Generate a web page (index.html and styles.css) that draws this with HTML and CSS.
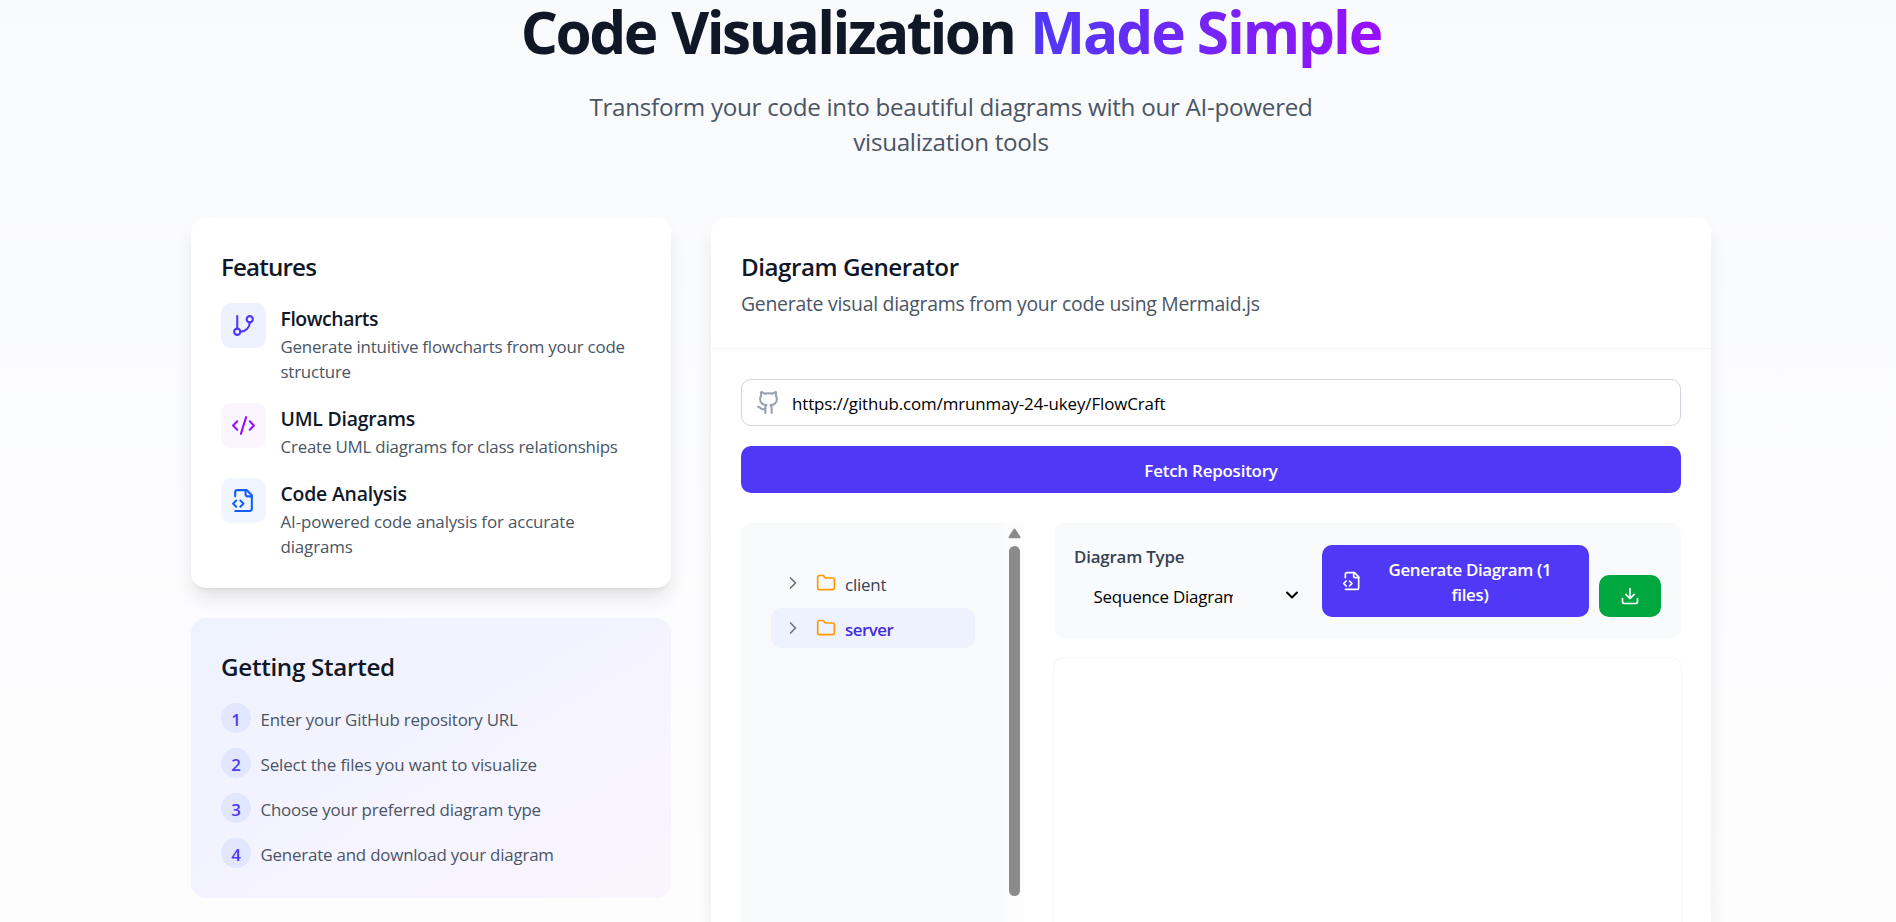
FILE: index.html
```html
<!DOCTYPE html>
<html lang="en">
<head>
<meta charset="utf-8">
<title>Code Visualization Made Simple</title>
<link rel="stylesheet" href="styles.css">
</head>
<body>
<svg class="sprite" aria-hidden="true">
  <symbol id="file-code" viewBox="0 0 24 24"><path d="M4 22h14a2 2 0 0 0 2-2V7l-5-5H6a2 2 0 0 0-2 2v4"/><path d="M14 2v4a2 2 0 0 0 2 2h4"/><path d="m5 12-3 3 3 3"/><path d="m9 18 3-3-3-3"/></symbol>
  <symbol id="folder" viewBox="0 0 24 24"><path d="M20 20a2 2 0 0 0 2-2V8a2 2 0 0 0-2-2h-7.9a2 2 0 0 1-1.69-.9L9.6 3.9A2 2 0 0 0 7.93 3H4a2 2 0 0 0-2 2v13a2 2 0 0 0 2 2Z"/></symbol>
  <symbol id="chevron" viewBox="0 0 24 24"><path d="m9 18 6-6-6-6"/></symbol>
</svg>
<main class="page">
  <header class="hero">
    <h1 class="hero-title"><span class="hero-dark">Code Visualization </span><span class="hero-accent">Made Simple</span></h1>
    <p class="hero-sub">Transform your code into beautiful diagrams with our AI-powered<br>visualization tools</p>
  </header>
  <div class="columns">
    <aside class="side">
      <section class="card features">
        <h2 class="card-title t-features">Features</h2>
        <div class="feature-list">
          <div class="feature">
            <span class="tile tile-indigo"><svg class="icon" viewBox="0 0 24 24"><path d="M6 3v12"/><circle cx="18" cy="6" r="3"/><circle cx="6" cy="18" r="3"/><path d="M18 9a9 9 0 0 1-9 9"/></svg></span>
            <div><h3 class="feature-name n-flow">Flowcharts</h3><p class="feature-text">Generate intuitive flowcharts from your code structure</p></div>
          </div>
          <div class="feature">
            <span class="tile tile-purple"><svg class="icon" viewBox="0 0 24 24"><path d="m18 16 4-4-4-4"/><path d="m6 8-4 4 4 4"/><path d="m14.5 4-5 16"/></svg></span>
            <div><h3 class="feature-name">UML Diagrams</h3><p class="feature-text">Create UML diagrams for class relationships</p></div>
          </div>
          <div class="feature">
            <span class="tile tile-blue"><svg class="icon"><use href="#file-code"/></svg></span>
            <div><h3 class="feature-name">Code Analysis</h3><p class="feature-text t-ai">AI-powered code analysis for accurate diagrams</p></div>
          </div>
        </div>
      </section>
      <section class="card started">
        <h2 class="card-title t-started">Getting Started</h2>
        <ol class="steps">
          <li class="step"><span class="num">1</span><span>Enter your GitHub repository URL</span></li>
          <li class="step"><span class="num">2</span><span class="t-select">Select the files you want to visualize</span></li>
          <li class="step"><span class="num">3</span><span>Choose your preferred diagram type</span></li>
          <li class="step"><span class="num">4</span><span>Generate and download your diagram</span></li>
        </ol>
      </section>
    </aside>
    <section class="generator">
      <div class="gen-head">
        <h2 class="card-title t-gen">Diagram Generator</h2>
        <p class="gen-sub">Generate visual diagrams from your code using Mermaid.js</p>
      </div>
      <div class="gen-body">
        <div class="url-field">
          <svg class="icon" viewBox="0 0 24 24"><path d="M15 22v-4a4.8 4.8 0 0 0-1-3.5c3 0 6-2 6-5.5.08-1.25-.27-2.48-1-3.5.28-1.15.28-2.35 0-3.5 0 0-1 0-3 1.5-2.64-.5-5.36-.5-8 0C6 2 5 2 5 2c-.3 1.15-.3 2.35 0 3.5A5.403 5.403 0 0 0 4 9c0 3.5 3 5.5 6 5.5-.39.49-.68 1.05-.85 1.65-.17.6-.22 1.23-.15 1.85v4"/><path d="M9 18c-4.51 2-5-2-7-2"/></svg>
          <span class="url">https://github.com/mrunmay-24-ukey/FlowCraft</span>
        </div>
        <button class="fetch">Fetch Repository</button>
        <div class="workspace">
          <div class="tree">
            <div class="tree-rows">
              <div class="row"><svg class="chev"><use href="#chevron"/></svg><svg class="fold"><use href="#folder"/></svg><span>client</span></div>
              <div class="row selected"><svg class="chev"><use href="#chevron"/></svg><svg class="fold"><use href="#folder"/></svg><span>server</span></div>
            </div>
            <div class="scrollbar">
              <svg class="arrow" viewBox="0 0 13 11"><path d="M6.5 1.5 11.5 9.3H1.5Z"/></svg>
              <div class="thumb"></div>
            </div>
          </div>
          <div class="output">
            <div class="toolbar">
              <div class="type">
                <span class="type-label">Diagram Type</span>
                <div class="select"><span class="select-text">Sequence Diagram</span><svg class="select-arrow" viewBox="0 0 12 8"><path d="m1 1.5 5 5 5-5"/></svg></div>
              </div>
              <button class="generate"><svg class="icon-sm"><use href="#file-code"/></svg><span class="generate-text">Generate Diagram (1<br>files)</span></button>
              <button class="download" aria-label="Download"><svg class="icon-sm" viewBox="0 0 24 24"><path d="M12 15V3"/><path d="M21 15v4a2 2 0 0 1-2 2H5a2 2 0 0 1-2-2v-4"/><path d="m7 10 5 5 5-5"/></svg></button>
            </div>
            <div class="canvas"></div>
          </div>
        </div>
      </div>
    </section>
  </div>
</main>
</body>
</html>
```
FILE: styles.css
```css
* { box-sizing: border-box; margin: 0; padding: 0; }
body {
  height: 922px;
  overflow: hidden;
  background: linear-gradient(#f9fafc, #fdfdfe);
  font: 400 16.9px/25px "Open Sans", "Noto Sans", sans-serif;
  letter-spacing: -0.2px;
  color: #4a5565;
}
svg { display: block; flex: none; fill: none; stroke: currentColor; stroke-width: 2; stroke-linecap: round; stroke-linejoin: round; }
.sprite { width: 0; height: 0; position: absolute; }
button { border: 0; font: inherit; color: #fff; letter-spacing: inherit; }
.icon { width: 25px; height: 25px; }
.icon-sm { width: 20px; height: 20px; }
.page { width: 1520px; height: 922px; margin-left: 191px; }

.hero { height: 218px; text-align: center; }
.hero-title { height: 88px; font-size: 58.5px; line-height: 63px; font-weight: 700; color: #101828; white-space: nowrap; }
.hero-dark { letter-spacing: -2.55px; word-spacing: 3px; }
.hero-accent { letter-spacing: -2.1px; background: linear-gradient(90deg, #4f39f6, #9810fa); -webkit-background-clip: text; background-clip: text; color: transparent; }
.hero-sub { font-size: 24.2px; line-height: 35px; letter-spacing: -0.28px; padding-top: 1px; }

.columns { display: grid; grid-template-columns: 480px 1000px; gap: 40px; align-items: start; }
.side { display: grid; gap: 30px; }
.card { padding: 30px; border-radius: 15px; }
.features { height: 370px; background: #fff; box-shadow: 0 12.5px 18.75px -3.75px rgba(0,0,0,.1), 0 5px 7.5px -5px rgba(0,0,0,.1); }
.card-title { height: 35px; font-size: 24.2px; line-height: 37px; font-weight: 600; color: #101828; }
.t-features { letter-spacing: -0.85px; }
.t-started { letter-spacing: -0.3px; }
.t-gen { letter-spacing: -0.48px; }
.feature-list { display: grid; gap: 20px; margin-top: 20px; }
.feature { display: flex; gap: 14.5px; align-items: flex-start; }
.tile { flex: none; padding: 10px; border-radius: 10px; }
.tile-indigo { background: #eef2ff; color: #4f39f6; }
.tile-purple { background: #faf5ff; color: #9810fa; }
.tile-blue { background: #eff6ff; color: #155dfc; }
.feature-name { height: 30px; font-size: 19.4px; line-height: 32px; font-weight: 600; color: #101828; letter-spacing: -0.2px; }
.feature-text { padding-top: 1px; margin-bottom: -1px; }
.n-flow { letter-spacing: -0.45px; }
.t-ai { letter-spacing: -0.13px; }

.started { height: 280px; background: linear-gradient(to bottom right, #eef2ff, #faf5ff); }
.steps { display: grid; gap: 15px; margin-top: 20px; list-style: none; }
.step { display: flex; gap: 9.5px; line-height: 33px; height: 30px; }
.t-select { letter-spacing: -0.12px; }
.num { width: 30px; height: 30px; border-radius: 50%; background: #e0e7ff; color: #4f39f6; font-weight: 600; text-align: center; }

.generator { height: 704px; background: #fff; border-radius: 15px 15px 0 0; box-shadow: 0 12.5px 18.75px -3.75px rgba(0,0,0,.1); }
.gen-head { height: 131px; padding: 30px; border-bottom: 1px solid #f3f4f6; }
.gen-sub { margin-top: 5px; font-size: 19.4px; line-height: 32px; letter-spacing: -0.26px; }
.gen-body { padding: 30px 30px 0; }
.url-field { display: flex; align-items: center; gap: 11px; height: 47px; padding-left: 14px; border: 1px solid #d1d5dc; border-radius: 10px; color: #99a1af; }
.url { color: #000; letter-spacing: -0.1px; padding-top: 1px; }
.fetch { display: block; width: 100%; height: 47px; margin-top: 20px; border-radius: 10px; background: #4f39f6; font-weight: 600; padding-top: 1px; }
.workspace { display: grid; grid-template-columns: 283px 627px; gap: 30px; margin-top: 30px; }

.tree { display: flex; height: 399px; border-radius: 10px 0 0 0; background: #f9fafb; }
.tree-rows { width: 264px; padding: 40px 30px; display: flex; flex-direction: column; gap: 5px; }
.row { display: flex; align-items: center; height: 40px; padding-left: 11.5px; border-radius: 10px; color: #364153; }
.row span { margin: 2px 0 0 9.5px; }
.selected { background: #eef2ff; color: #432dd7; font-weight: 600; letter-spacing: -0.5px; }
.chev { width: 20px; height: 20px; color: #6a7282; }
.fold { width: 20px; height: 20px; color: #fe9a00; margin-left: 13px; }
.scrollbar { width: 19px; background: #fcfcfc; padding: 5px 3px; }
.arrow { width: 13px; height: 11px; fill: #8b8b8b; stroke: #8b8b8b; }
.thumb { width: 11px; height: 350px; margin: 7px 0 0 1px; border-radius: 6px; background: #8b8b8b; }

.output { display: grid; gap: 20px; align-content: start; }
.toolbar { display: flex; align-items: flex-end; gap: 10px; height: 115px; padding: 20px 20px 21px; border-radius: 10px; background: #f9fafb; }
.type { width: 238px; height: 73px; }
.type-label { display: block; font-weight: 600; color: #364153; }
.select { display: flex; align-items: center; height: 40px; margin-top: 6px; padding: 0 14px 0 19.5px; justify-content: space-between; color: #000; }
.select-text { width: 139px; overflow: hidden; white-space: nowrap; padding-top: 2px; }
.select-arrow { width: 12px; height: 8px; }
.generate { display: flex; align-items: center; width: 267px; height: 72px; padding-left: 20px; border-radius: 10px; background: #4f39f6; font-weight: 600; letter-spacing: -0.33px; }
.generate-text { flex: 1; text-align: center; margin-right: 11px; padding-top: 2px; }
.download { display: grid; place-items: center; width: 62px; height: 42px; border-radius: 10px; background: #00a63e; }
.canvas { height: 264px; border-radius: 10px 10px 0 0; background: #fff; box-shadow: 0 0 0 1px #f6f7f8, 0 1px 3px rgba(0,0,0,.08); }
```
